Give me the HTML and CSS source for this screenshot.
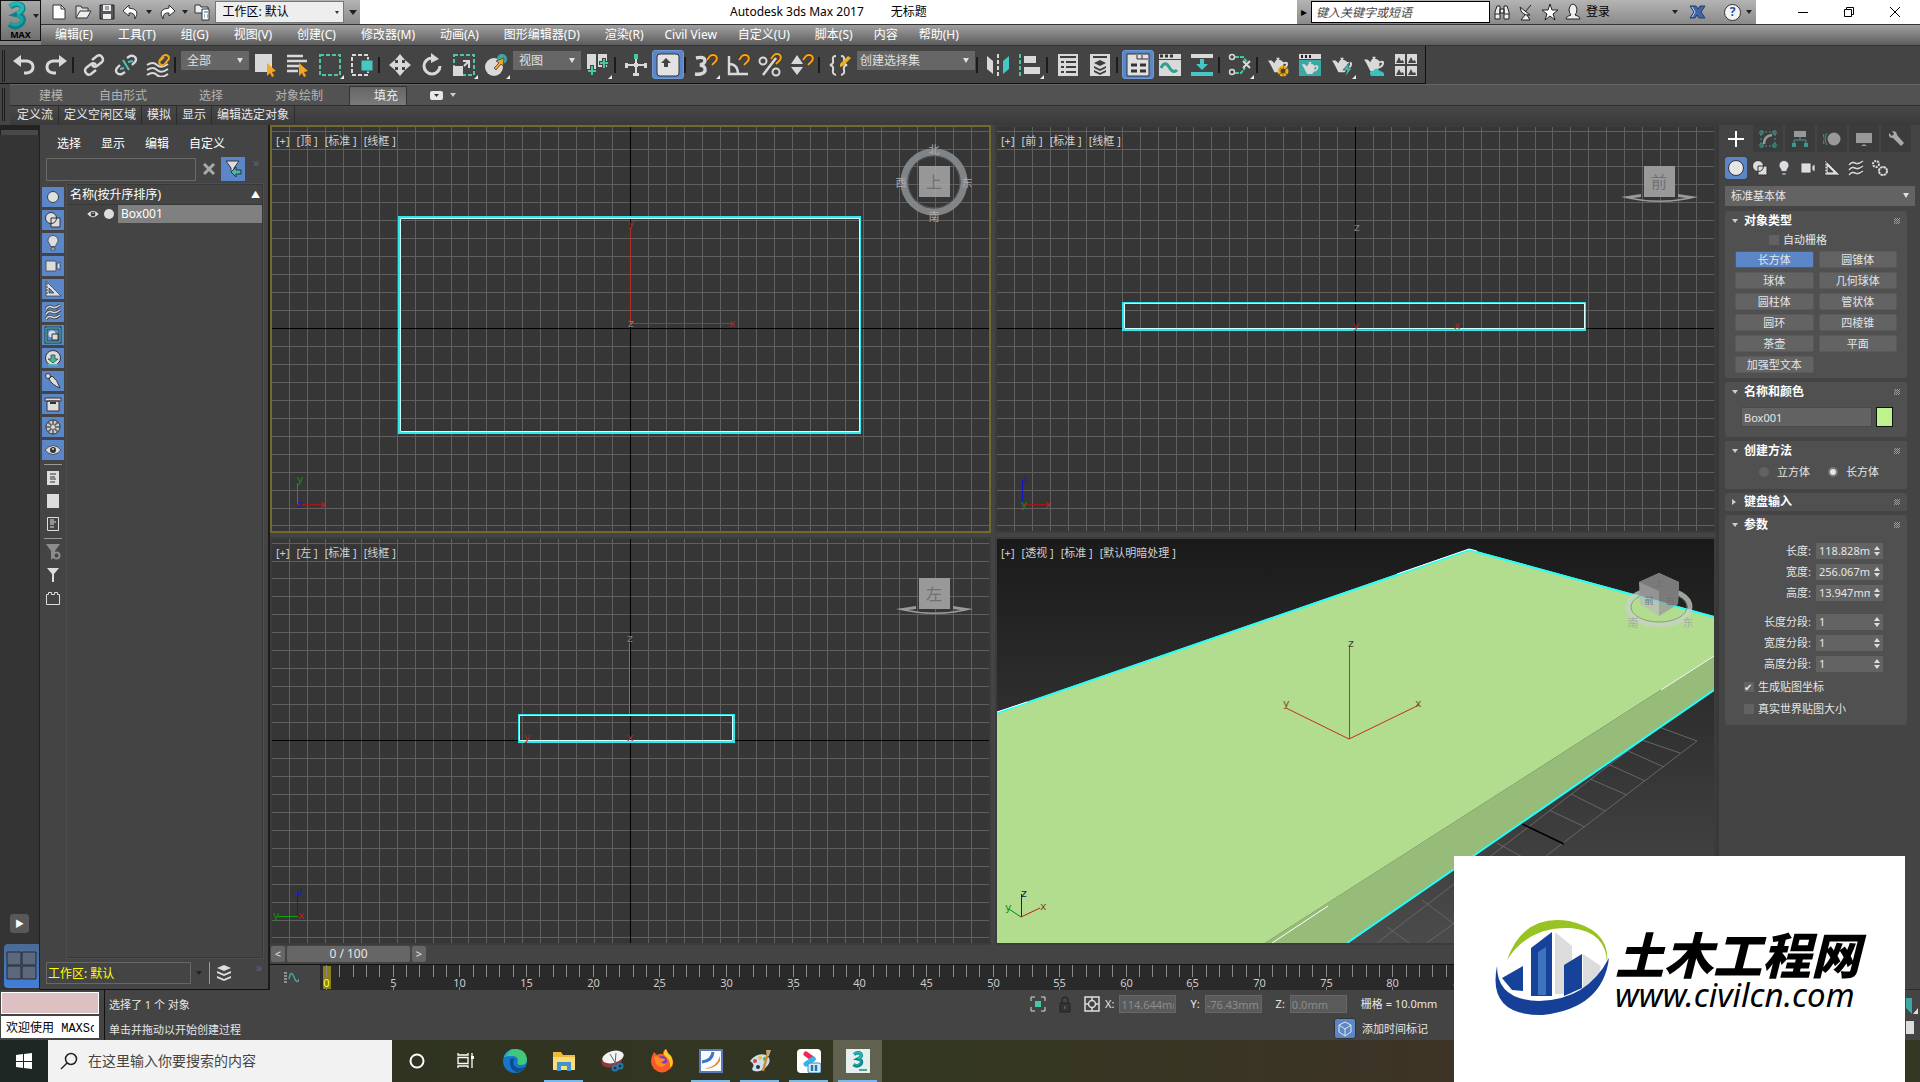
FILE: index.html
```html
<!DOCTYPE html>
<html lang="zh-CN">
<head>
    <meta charset="UTF-8">
    <meta name="viewport" content="width=device-width, initial-scale=1.0">
    <title>Autodesk 3ds Max 2017 - 无标题</title>
    <link rel="stylesheet" href="styles.css">
</head>
<body>
    <!-- 公用图标 -->
    <svg class="symbols" width="0" height="0">
        <symbol id="magnet" viewBox="0 0 12 12"><path d="M1 6L4 2Q7 0 10 2Q12 5 9 8L6 11" fill="none" stroke="#5a2a10" stroke-width="3.4"/><path d="M1 6L4 2Q7 0 10 2Q12 5 9 8L6 11" fill="none" stroke="#f0a818" stroke-width="2"/></symbol>
        <symbol id="teapot" viewBox="0 0 24 20"><path d="M1 5l4 0 3 3q1-3 3-4l-1-2h4l-1 2q4 1 5 3q6-2 5 3q-1 4-6 5l-2 3H8q-2-4-4-8zM18 9v4q3-2 3-4q-1-1-3 0z" fill="#d9d9d9" fill-rule="evenodd"/></symbol>
        <symbol id="layers" viewBox="0 0 16 16"><path d="M8 0l7 3-7 3-7-3zM1 6l7 3 7-3v2l-7 3-7-3zM1 11l7 3 7-3v2l-7 3-7-3z" fill="#ddd"/></symbol>
        <symbol id="shapes" viewBox="0 0 18 18"><circle cx="7" cy="7" r="5.5" fill="#ddd" stroke="#333"/><path d="M7 7h9v9H7z" fill="#ddd" stroke="#333"/><path d="M7 12.500q5 0 5.500-5.500" fill="none" stroke="#333"/></symbol>
        <symbol id="bulb" viewBox="0 0 18 18"><path d="M9 1.500a5 5 0 0 1 5 5c0 2-2 3-2.500 6h-5c-.5-3-2.500-4-2.500-6a5 5 0 0 1 5-5zM7 14h4v2H7z" fill="#ddd" stroke="#3a3f48" stroke-width=".8"/></symbol>
        <symbol id="camera" viewBox="0 0 18 18"><path d="M2 4h10v10H2zM13 7l3-2v8l-3-2z" fill="#ddd" stroke="#3a3f48" stroke-width=".8"/></symbol>
        <symbol id="set-square" viewBox="0 0 18 18"><path d="M2 1l15 15H2zM5 8v5h5z" fill="#ddd" fill-rule="evenodd" stroke="#333" stroke-width=".7"/><path d="M2 4h2M2 7h2M2 10h2M2 13h2" stroke="#333"/></symbol>
        <symbol id="waves" viewBox="0 0 18 18"><path d="M2 6q3-4 6-2t8-2M2 11q3-4 6-2t8-2M2 16q3-4 6-2t8-2" fill="none" stroke="#333" stroke-width="3"/><path d="M2 6q3-4 6-2t8-2M2 11q3-4 6-2t8-2M2 16q3-4 6-2t8-2" fill="none" stroke="#d5d5d5" stroke-width="1.600"/></symbol>
        <symbol id="eye" viewBox="0 0 18 18"><path d="M1 9q8-9 16 0q-8 9-16 0z" fill="#ddd" stroke="#333" stroke-width=".8"/><circle cx="9" cy="9" r="3" fill="#333"/><circle cx="9" cy="8" r="1" fill="#ddd"/></symbol>
        <symbol id="three" viewBox="0 0 24 30"><path d="M5 6Q12 1 17 5Q20 10 12 14Q21 16 17 23Q11 29 4 24" fill="none" stroke="#0e7f86" stroke-width="6"/><path d="M5 5Q12 0 17 5Q19 10 12 13" fill="none" stroke="#25b5b5" stroke-width="4"/><path d="M12 15Q20 17 16 22Q11 27 5 23" fill="none" stroke="#1aa3a3" stroke-width="3"/></symbol>
    </svg>

    <header class="app-header">
        <button class="app-logo" aria-label="3ds Max">
            <svg width="24" height="29"><use href="#three"/></svg>
            <i class="caret"></i>
            <b>MAX</b>
        </button>
        <div class="title-bar">
            <div class="quick-access">
                <button aria-label="新建"><svg width="18" height="18"><path d="M3 2h8l4 4v10H3z" fill="#fff" stroke="#333"/><path d="M11 2v4h4" fill="none" stroke="#333"/></svg></button>
                <button aria-label="打开"><svg width="18" height="18"><path d="M2 15V3h5l1 2h6v3" fill="#ddd" stroke="#333"/><path d="M2 15l4-7h11l-4 7z" fill="#eee" stroke="#333"/></svg></button>
                <button aria-label="保存"><svg width="18" height="18"><path d="M2 2h14v14H2z" fill="#57575f" stroke="#222"/><path d="M5 2h8v6H5zM5 11h8v5H5z" fill="#eee"/><path d="M7 4h4M7 6h4" stroke="#555"/></svg></button>
                <button aria-label="撤消"><svg width="18" height="18"><path d="M7 2L1 8l6 5v-3q6-1 6 6q6-10-6-11z" fill="#fff" stroke="#333"/></svg></button>
                <i class="caret dark"></i>
                <button aria-label="重做"><svg width="18" height="18"><path d="M11 2l6 6-6 5v-3q-6-1-6 6q-6-10 6-11z" fill="#fff" stroke="#333"/></svg></button>
                <i class="caret dark"></i>
                <button aria-label="项目"><svg width="18" height="18"><path d="M2 2h5l1 2h7v6H2z" fill="#eee" stroke="#333"/><path d="M9 6h7v11H9z" fill="#fff" stroke="#333"/><path d="M11 9h4M11 12h1M14 12h1M11 14h1M14 14h1" stroke="#2868a8"/></svg></button>
                <label class="picker workspace-picker"><select aria-label="工作区"><option>工作区: 默认</option></select></label>
                <i class="caret dark wide"></i>
            </div>
            <div class="window-title"><span>Autodesk 3ds Max 2017</span><span>无标题</span></div>
            <div class="info-center">
                <button class="info-toggle" aria-label="折叠">▸</button>
                <input type="text" placeholder="键入关键字或短语" aria-label="搜索帮助">
                <button aria-label="搜索"><svg width="18" height="18"><path d="M2 9l2-6h3v13H2zM16 9l-2-6h-3v13h5zM7 6h4v4H7zM2 11h5M11 11h5" fill="#eee" stroke="#222"/></svg></button>
                <button aria-label="通信中心"><svg width="18" height="18"><path d="M3 4q1 9 10 8zM8 9l6-7M8 12l-4 5h9l-3-5" fill="#eee" stroke="#222"/></svg></button>
                <button aria-label="收藏夹"><svg width="18" height="18"><path d="M9 1l2 6h6l-5 4 2 6-5-4-5 4 2-6-5-4h6z" fill="#fff" stroke="#222"/></svg></button>
                <button class="login"><svg width="18" height="18"><path d="M2 16q0-3 5-4q-2-2-2-6q1-5 4-5t4 5q0 4-2 6q5 1 5 4z" fill="#eee" stroke="#222"/></svg>登录</button>
                <i class="caret dark"></i>
                <button class="exchange" aria-label="Exchange"><svg width="18" height="18"><path d="M1 3h6l2 3 2-3h5l-4 6 4 6h-6l-2-3-2 3H1l4-6z" fill="#3d67a8" stroke="#263c68"/><path d="M3 4l3 5-3 5" stroke="#c0d4ee" fill="none"/></svg></button>
                <button class="help" aria-label="帮助">?</button>
                <i class="caret dark"></i>
            </div>
            <div class="window-buttons">
                <button aria-label="最小化"><svg width="12" height="12"><path d="M1 6.500h10" stroke="#000"/></svg></button>
                <button aria-label="还原"><svg width="12" height="12"><path d="M1.500 3.500h7v7h-7zM3.500 3V1.500h7v7H9" fill="none" stroke="#000"/></svg></button>
                <button aria-label="关闭"><svg width="12" height="12"><path d="M1 1l10 10M11 1L1 11" stroke="#000"/></svg></button>
            </div>
        </div>
        <nav class="menu-bar">
            <button>编辑(E)</button><button>工具(T)</button><button>组(G)</button><button>视图(V)</button><button>创建(C)</button><button>修改器(M)</button><button>动画(A)</button><button>图形编辑器(D)</button><button>渲染(R)</button><button class="tight">Civil View</button><button class="tight">自定义(U)</button><button>脚本(S)</button><button class="tight">内容</button><button class="tight">帮助(H)</button>
        </nav>
    </header>

    <div class="toolbar-row">
        <div class="toolbar">
            <i class="grip"></i>
            <button aria-label="撤消"><svg viewBox="0 0 24 24"><path d="M4 8h11q6 1 6 6t-6 6h-3" fill="none" stroke="#d9d9d9" stroke-width="3"/><path d="M9 2v12L1 8z" fill="#d9d9d9"/></svg></button>
            <button aria-label="重做"><svg viewBox="0 0 24 24"><path d="M20 8H9q-6 1-6 6t6 6h3" fill="none" stroke="#d9d9d9" stroke-width="3"/><path d="M15 2v12l8-6z" fill="#d9d9d9"/></svg></button>
            <i class="sep"></i>
            <button aria-label="链接"><svg viewBox="0 0 24 24" fill="none" stroke="#d9d9d9" stroke-width="2.400"><path d="M10 7l5-4q3-2 5 1t0 5l-5 4q-3 2-5-1M14 17l-5 4q-3 2-5-1t0-5l5-4q3-2 5 1"/></svg></button>
            <button aria-label="取消链接"><svg viewBox="0 0 24 24" fill="none" stroke="#d9d9d9" stroke-width="2.400"><path d="M13 5l3-2q3-1 5 1t0 5l-3 3M11 19l-3 2q-3 1-5-1t0-5l3-3"/><path d="M9 7l6 10M6 16l4-1M14 9l5-1" stroke="#4fc4bd" stroke-width="2"/></svg></button>
            <button aria-label="绑定到空间扭曲"><svg viewBox="0 0 24 24" fill="none"><path d="M1 12q6-4 10 0t11-1M1 17q6-4 10 0t11-1M1 22q6-4 10 0t11-1" stroke="#d9d9d9" stroke-width="2"/><path d="M13 8l4-5q3-2 5 0t0 4l-4 5q-2 1-4-1t1-4l3-3" stroke="#f0a818" stroke-width="2"/></svg></button>
            <i class="sep"></i>
            <label class="picker filter-picker"><select aria-label="选择过滤器"><option>全部</option></select></label>
            <button aria-label="选择对象"><svg viewBox="0 0 24 24"><path d="M1 1h17v18H1z" fill="#d9d9d9"/><path d="M13 10l9 8-4 1 2 4-2 1-2-4-3 3z" fill="#f5a623"/></svg></button>
            <button aria-label="按名称选择"><svg viewBox="0 0 24 24"><path d="M1 3h16M1 8h20M1 13h14M1 18h11" stroke="#d9d9d9" stroke-width="2.600"/><path d="M13 10l9 8-4 1 2 4-2 1-2-4-3 3z" fill="#f5a623"/></svg></button>
            <button class="flyout" aria-label="矩形选择区域"><svg viewBox="0 0 24 24"><path d="M2 2h20v20H2z" fill="none" stroke="#4fc4a8" stroke-width="2" stroke-dasharray="4 2"/></svg></button>
            <button aria-label="窗口/交叉"><svg viewBox="0 0 24 24"><path d="M2 2h16v20H2z" fill="none" stroke="#d9d9d9" stroke-width="2" stroke-dasharray="4 2"/><path d="M11 7h12v11H11z" fill="#45c8c4" stroke="#444"/></svg></button>
            <i class="sep"></i>
            <button aria-label="移动"><svg viewBox="0 0 24 24"><path d="M12 1l5 6h-3v3h3V7l6 5-6 5v-3h-3v3h3l-5 6-5-6h3v-3H7v3l-6-5 6-5v3h3V7H7z" fill="#d9d9d9"/></svg></button>
            <button aria-label="旋转"><svg viewBox="0 0 24 24"><path d="M20 13a8 8 0 1 1-8-8" fill="none" stroke="#d9d9d9" stroke-width="3"/><path d="M11 0v10l8-4z" fill="#d9d9d9"/></svg></button>
            <button class="flyout" aria-label="缩放"><svg viewBox="0 0 24 24"><path d="M2 2h20v20H2z" fill="none" stroke="#4fc4a8" stroke-width="2" stroke-dasharray="4 2"/><path d="M1 13h10v10H1z" fill="#d9d9d9"/><path d="M11 8h6v7M16 9l-4 4" stroke="#d9d9d9" stroke-width="2" fill="none"/></svg></button>
            <button class="flyout" aria-label="放置"><svg viewBox="0 0 24 24"><circle cx="10" cy="14" r="9" fill="#d9d9d9"/><circle cx="18" cy="6" r="5" fill="#3aa9ad"/><path d="M10 15l5-5-3-2 8-3-1 8-2-2-5 6z" fill="#f5a623" stroke="#444" stroke-width=".8"/></svg></button>
            <label class="picker filter-picker"><select aria-label="参考坐标系"><option>视图</option></select></label>
            <button class="flyout" aria-label="轴点中心"><svg viewBox="0 0 24 24"><path d="M1 1h9v16H1zM12 1h9v13h-9z" fill="#d9d9d9"/><path d="M6 12v11M1 18h10M18 5v11M13 10h10" stroke="#444" stroke-width="4"/><path d="M6 13v9M2 18h8M18 6v9M14 10h8" stroke="#45c8a8" stroke-width="2"/></svg></button>
            <i class="sep"></i>
            <button aria-label="选择并操纵"><svg viewBox="0 0 24 24"><path d="M12 5v17M3 12h18" stroke="#d9d9d9" stroke-width="2"/><path d="M10 10h4v4h-4zM9 20h6v3H9zM1 10h3v5H1zM20 10h3v5h-3z" fill="#d9d9d9"/><path d="M10 1h4v5h-4z" fill="#45c8a8"/></svg></button>
            <button class="active" aria-label="键盘快捷键覆盖切换"><svg viewBox="0 0 24 24"><rect x="1" y="1" width="22" height="22" rx="3" fill="#e2e2e2" stroke="#333"/><path d="M10 5l5 5h-3v4H8v-4H5z" fill="#444"/></svg></button>
            <i class="sep"></i>
            <button class="flyout" aria-label="捕捉开关"><svg viewBox="0 0 24 24"><path d="M2 5q8-2 9 2q0 4-5 5q6 1 5 6q-2 4-10 3" fill="none" stroke="#d9d9d9" stroke-width="3.400"/><use href="#magnet" x="12" width="12" height="14"/></svg></button>
            <button aria-label="角度捕捉"><svg viewBox="0 0 24 24"><path d="M3 3v18h19M3 11q9 0 9 10" fill="none" stroke="#d9d9d9" stroke-width="2.400"/><use href="#magnet" x="12" width="12" height="14"/></svg></button>
            <button aria-label="百分比捕捉"><svg viewBox="0 0 24 24"><circle cx="5" cy="8" r="3.500" fill="none" stroke="#d9d9d9" stroke-width="2"/><circle cx="18" cy="19" r="3.500" fill="none" stroke="#d9d9d9" stroke-width="2"/><path d="M18 5L5 22" stroke="#d9d9d9" stroke-width="2.500"/><use href="#magnet" x="12" width="12" height="12"/></svg></button>
            <button aria-label="微调器捕捉"><svg viewBox="0 0 24 24"><path d="M7 2l6 9H1zM1 14h12l-6 8z" fill="#d9d9d9"/><use href="#magnet" x="12" width="12" height="14"/></svg></button>
            <i class="sep"></i>
            <button aria-label="编辑命名选择集"><svg viewBox="0 0 24 24"><path d="M8 3q-4 0-3 4t-3 5q4 1 3 5t3 5M13 3q4 0 3 4t3 5q-4 1-3 5t-3 5" fill="none" stroke="#d9d9d9" stroke-width="2"/><path d="M12 11l8-8 3 2-8 8-3 1z" fill="#f0b020"/></svg></button>
            <label class="picker set-picker"><select aria-label="命名选择集"><option>创建选择集</option></select></label>
            <i class="sep"></i>
            <button aria-label="镜像"><svg viewBox="0 0 24 24"><path d="M1 3l6 5v13l-6-5z" fill="#d9d9d9"/><path d="M23 3l-6 5v13l6-5z" fill="#45c8c4"/><path d="M12 1v22" stroke="#d9d9d9" stroke-width="2" stroke-dasharray="4 2"/></svg></button>
            <button class="flyout" aria-label="对齐"><svg viewBox="0 0 24 24"><path d="M2 1v22" stroke="#45c8a8" stroke-width="2" stroke-dasharray="4 2"/><path d="M6 3h12v7H6zM6 14h16v7H6z" fill="#d9d9d9"/></svg></button>
            <i class="sep"></i>
            <button aria-label="场景资源管理器"><svg viewBox="0 0 24 24"><path d="M2 1h20v22H2z" fill="#d9d9d9"/><path d="M4 4h16M5 9h3M10 9h10M5 14h3M10 14h10M5 19h3M10 19h10" stroke="#3c3c3c" stroke-width="2"/></svg></button>
            <button aria-label="层资源管理器"><svg viewBox="0 0 24 24"><path d="M2 1h20v22H2z" fill="#d9d9d9"/><path d="M5 4h14" stroke="#3c3c3c" stroke-width="2"/><path d="M12 7l6 3-6 3-6-3zM6 13l6 3 6-3v2l-6 3-6-3zM6 17l6 3 6-3v2l-6 3-6-3z" fill="#3c3c3c"/></svg></button>
            <i class="sep"></i>
            <button class="active" aria-label="显示功能区"><svg viewBox="0 0 24 24"><path d="M1 1h22v22H1z" fill="#e0e0e0" stroke="#333"/><path d="M11 2v4h11M16 2v4" fill="none" stroke="#333"/><path d="M5 12h6M14 12h6M5 18h6M14 18h6" stroke="#333" stroke-width="3"/></svg></button>
            <button aria-label="曲线编辑器"><svg viewBox="0 0 24 24"><path d="M1 1h22v22H1z" fill="#d9d9d9"/><path d="M2 3h3M7 3h3M12 3h3" stroke="#333" stroke-width="3"/><path d="M1 6.500h22" stroke="#444"/><path d="M3 15q4-8 8-1t8 3" fill="none" stroke="#2f9f90" stroke-width="3"/></svg></button>
            <button aria-label="图解视图"><svg viewBox="0 0 24 24"><path d="M1 1h22v4H1z" fill="#d9d9d9"/><path d="M1 19h22v4H1zM10 6h4v5h4l-6 6-6-6h4z" fill="#45c8c4"/></svg></button>
            <i class="sep"></i>
            <button class="flyout" aria-label="材质编辑器"><svg viewBox="0 0 24 24"><path d="M7 4h8l4 5M7 20h6l4-5" fill="none" stroke="#45c8a8" stroke-width="2" stroke-dasharray="4 1"/><path d="M15 8l7 7M22 8l-7 7" stroke="#d9d9d9" stroke-width="2"/><circle cx="4" cy="4" r="2.500" fill="none" stroke="#d9d9d9" stroke-width="1.500"/><circle cx="4" cy="19" r="2.500" fill="none" stroke="#d9d9d9" stroke-width="1.500"/></svg></button>
            <i class="sep"></i>
            <button aria-label="渲染设置"><svg viewBox="0 0 24 24"><use href="#teapot" y="3" width="24" height="18"/><circle cx="17" cy="18" r="4" fill="#5a4210" stroke="#f0b020" stroke-width="3" stroke-dasharray="2.500 .7"/></svg></button>
            <button aria-label="渲染帧窗口"><svg viewBox="0 0 24 24"><path d="M1 1h22v5H1z" fill="#d9d9d9"/><path d="M3 3.500h2M7 3.500h2M11 3.500h2" stroke="#222" stroke-width="3"/><path d="M1 7h22v16H1z" fill="#3aa9a5"/><use href="#teapot" x="3" y="7" width="18" height="16"/></svg></button>
            <button class="flyout" aria-label="渲染产品"><svg viewBox="0 0 24 24"><use href="#teapot" y="3" width="24" height="18"/><path d="M20 9l-7 8h4l-2 7 7-9h-4z" fill="#38c4bd" stroke="#444" stroke-width=".7"/></svg></button>
            <button aria-label="在云中渲染"><svg viewBox="0 0 24 24"><use href="#teapot" y="2" width="24" height="18"/><path d="M9 23q-3-5 2-5q3-5 7 0q5 1 4 5z" fill="#38c4bd"/></svg></button>
            <button aria-label="渲染库"><svg viewBox="0 0 24 24"><path d="M1 1h10v10H1zM13 1h10v10H13zM1 13h10v10H1zM13 13h10v10H13z" fill="#d9d9d9"/><path d="M2 10l3-6 2 4 2-1 1 3zM14 10l3-6 2 4 2-1 1 3zM2 22l3-6 2 4 2-1 1 3zM14 22l3-6 2 4 2-1 1 3z" fill="#444"/></svg></button>
        </div>
    </div>

    <div class="ribbon">
        <i class="grip"></i>
        <div class="ribbon-body">
            <div class="ribbon-tabs">
                <button>建模</button><button>自由形式</button><button>选择</button><button>对象绘制</button><button class="current">填充</button>
                <button class="ribbon-min" aria-label="最小化功能区"><svg width="13" height="9"><rect width="13" height="9" rx="2" fill="#e8e8e8"/><path d="M4 3h5L6.500 6z" fill="#333"/></svg></button><i class="caret"></i>
            </div>
            <div class="ribbon-panels">
                <button>定义流</button><button>定义空闲区域</button><button>模拟</button><button>显示</button><button>编辑选定对象</button>
            </div>
        </div>
    </div>

    <main class="workspace">
        <aside class="dock">
            <div class="dock-head"></div>
            <button class="dock-play" aria-label="展开">▶</button>
            <button class="dock-layout" aria-label="视口布局"><svg width="32" height="30"><path d="M1 1h14v13H1zM16 1h14v13H16zM1 15h14v13H1zM16 15h14v13H16z" fill="#5c697c" stroke="#222b38"/></svg></button>
        </aside>

        <section class="explorer">
            <nav class="explorer-menu"><button>选择</button><button>显示</button><button>编辑</button><button>自定义</button></nav>
            <div class="explorer-search">
                <input type="text" aria-label="查找">
                <button class="clear" aria-label="清除"><svg width="12" height="12"><path d="M1 1l10 10M11 1L1 11" stroke="#a8a8a8" stroke-width="3"/></svg></button>
                <button class="filter" aria-label="过滤"><svg width="18" height="18"><path d="M2 1h13l-5 7v6l-3-3V8z" fill="#ddd" stroke="#333"/><path d="M17 10h-5V7l-5 5 5 5v-3h5z" fill="#48b8a0" stroke="#234"/></svg></button>
                <span class="more">»</span>
            </div>
            <div class="explorer-body">
                <div class="explorer-icons">
                    <button class="on" aria-label="几何体"><svg viewBox="0 0 18 18"><circle cx="9" cy="9" r="5.500" fill="#e0e0e0" stroke="#3a3f48"/></svg></button>
                    <button class="on" aria-label="图形"><svg><use href="#shapes"/></svg></button>
                    <button class="on" aria-label="灯光"><svg><use href="#bulb"/></svg></button>
                    <button class="on" aria-label="摄影机"><svg><use href="#camera"/></svg></button>
                    <button class="on" aria-label="辅助对象"><svg><use href="#set-square"/></svg></button>
                    <button class="on" aria-label="空间扭曲"><svg><use href="#waves"/></svg></button>
                    <button class="on" aria-label="组"><svg viewBox="0 0 18 18"><path d="M2 2h14v14H2z" fill="none" stroke="#1f3b48" stroke-width="3"/><path d="M2 2h14v14H2z" fill="none" stroke="#5cd0b4"/><circle cx="8" cy="8" r="3.500" fill="#ddd"/><path d="M8 8h6v6H8z" fill="#ddd" stroke="#333"/></svg></button>
                    <button class="on" aria-label="外部参照"><svg viewBox="0 0 18 18"><circle cx="9" cy="9" r="7.500" fill="#ddd" stroke="#333"/><path d="M7 6h4v4h3l-5 4-5-4h3z" fill="#48b8a0" stroke="#234" stroke-width=".7"/><path d="M4 16h10" stroke="#48b8a0" stroke-width="2"/></svg></button>
                    <button class="on" aria-label="骨骼"><svg viewBox="0 0 18 18"><path d="M5 7l3-3q5 3 8 12q-8-3-11-9z" fill="#ddd" stroke="#333"/><circle cx="4" cy="4" r="2.500" fill="#ddd" stroke="#333"/></svg></button>
                    <button class="on" aria-label="容器"><svg viewBox="0 0 18 18"><path d="M1 3h16v3H1zM3 6h12v10H3z" fill="#ddd" stroke="#333"/><path d="M6 8h6" stroke="#333" stroke-width="2"/></svg></button>
                    <button class="on" aria-label="冻结"><svg viewBox="0 0 18 18"><circle cx="9" cy="9" r="7" fill="#ccc" stroke="#333"/><path d="M9 2v14M2 9h14M4 4l10 10M14 4L4 14" stroke="#555" stroke-width="1.500"/><circle cx="9" cy="9" r="2" fill="#ddd"/></svg></button>
                    <button class="on" aria-label="隐藏"><svg><use href="#eye"/></svg></button>
                    <hr>
                    <button aria-label="显示全部"><svg viewBox="0 0 18 18"><path d="M3 2h12v14H3z" fill="#ddd"/><path d="M6 5h6M6 8h5M6 10h6M6 13h5" stroke="#333"/></svg></button>
                    <button aria-label="不显示"><svg viewBox="0 0 18 18"><path d="M3 2h12v14H3z" fill="#ddd"/></svg></button>
                    <button aria-label="反转显示"><svg viewBox="0 0 18 18"><path d="M3.500 2.500h11v13h-11z" fill="none" stroke="#ddd"/><path d="M6 5h4M6 7h6M6 9h4M6 12h4" stroke="#ddd"/></svg></button>
                    <hr>
                    <button aria-label="配置过滤器"><svg viewBox="0 0 18 18"><path d="M2 1h14l-5 7v5L7 17V8z" fill="#8c8c8c"/><circle cx="12.500" cy="12.500" r="3" fill="#444" stroke="#8c8c8c" stroke-width="2"/></svg></button>
                    <button aria-label="过滤器"><svg viewBox="0 0 18 18"><path d="M3 2h12l-5 6v8H8V8z" fill="#ddd"/></svg></button>
                    <button aria-label="插件"><svg viewBox="0 0 18 18"><path d="M2.500 5.500h2v-2h3v2h3v-2h3v2h2v10h-13z" fill="none" stroke="#ddd"/></svg></button>
                </div>
                <div class="tree">
                    <div class="tree-head"><span>名称(按升序排序)</span><span class="sort">▲</span></div>
                    <div class="tree-row"><svg width="14" height="14"><use href="#eye"/></svg><i class="dot"></i><span class="tree-name">Box001</span></div>
                </div>
            </div>
            <div class="explorer-foot">
                <input type="text" value="工作区: 默认" aria-label="资源管理器名称">
                <i class="caret dark"></i>
                <span class="foot-sep"></span>
                <svg width="16" height="16"><use href="#layers"/></svg>
                <span class="more">»</span>
            </div>
        </section>

        <section class="stage">
            <div class="viewports">
                <div class="viewport selected">
                    <div class="vp-label"><button>[+]</button><button>[顶 ]</button><button>[标准 ]</button><button>[线框 ]</button></div>
                    <svg viewBox="0 0 717 404" preserveAspectRatio="xMidYMid slice">
                        <path class="grid"/>
                        <path class="axis" d="M0 201.500H717M358.500 0V404"/>
                        <path class="edge-cyan" d="M127 90h461v216H127z"/>
                        <path class="edge-white" d="M128.500 91.500h459v213h-459z"/>
                        <path d="M358.500 198V100M358 196.500H462" stroke="#b03028" fill="none"/>
                        <text class="g-red" x="356" y="100">y</text><text class="g-red" x="457" y="200">x</text><text class="g-grey" x="356" y="200">z</text>
                        <path d="M25.500 377V356" stroke="#10a010"/><path d="M26 377.500h26" stroke="#a01818"/>
                        <text class="g-green" x="25" y="356">y</text><text class="g-blue" x="25" y="381">z</text><text class="g-red" x="48" y="381">x</text>
                        <g opacity=".85"><circle cx="662" cy="55" r="30" fill="none" stroke="#8d9296" stroke-width="7"/><circle cx="662" cy="55" r="26" fill="none" stroke="#5b6165"/><path d="M647 39h31v31h-31z" fill="#a8a8a8"/></g>
                        <text class="cube-face" x="662" y="61">上</text><text class="cube-dir" x="662" y="27">北</text><text class="cube-dir" x="662" y="94">南</text><text class="cube-dir" x="629" y="60">西</text><text class="cube-dir" x="695" y="60">东</text>
                    </svg>
                </div>
                <div class="viewport">
                    <div class="vp-label"><button>[+]</button><button>[前 ]</button><button>[标准 ]</button><button>[线框 ]</button></div>
                    <svg viewBox="0 0 717 404" preserveAspectRatio="xMidYMid slice">
                        <path class="grid"/>
                        <path class="axis" d="M0 201.500H717M358.500 0V404"/>
                        <path class="edge-cyan" d="M126 176h462v27H126z"/>
                        <path class="edge-white" d="M127.500 176.500h460v25h-460z"/>
                        <path d="M358 202.500H462" stroke="#999"/>
                        <text class="g-grey" x="357" y="104">z</text><text class="g-red" x="356" y="202">y</text><text class="g-red" x="457" y="202">x</text>
                        <path d="M25.500 377V352" stroke="#1515c0"/><path d="M26 377.500h26" stroke="#a01818"/>
                        <text class="g-blue" x="24" y="356">z</text><text class="g-green" x="24" y="381">y</text><text class="g-red" x="48" y="381">x</text>
                        <path d="M624 70l20-3v3l-8 1q26 5 53 0l-8-1v-3l20 3q-38 10-77 0z" fill="#9a9a9a"/><path d="M647 39h31v31h-31z" fill="#999"/><text class="cube-face" x="662" y="61">前</text>
                    </svg>
                </div>
                <div class="viewport">
                    <div class="vp-label"><button>[+]</button><button>[左 ]</button><button>[标准 ]</button><button>[线框 ]</button></div>
                    <svg viewBox="0 0 717 404" preserveAspectRatio="xMidYMid slice">
                        <path class="grid"/>
                        <path class="axis" d="M0 201.500H717M358.500 0V404"/>
                        <path d="M357.500 104V176" stroke="#777"/>
                        <path class="edge-cyan" d="M247 176h215v27H247z"/>
                        <path class="edge-white" d="M247.500 176.500h213v25h-213z"/>
                        <text class="g-grey" x="355" y="103">z</text><text class="g-red" x="355" y="202">x</text><text class="g-red" x="252" y="202">y</text>
                        <path d="M25.500 377V352" stroke="#1515c0"/><path d="M6 377.500h20" stroke="#10a010"/>
                        <text class="g-blue" x="24" y="356">z</text><text class="g-green" x="1" y="380">y</text><text class="g-red" x="26" y="380">x</text>
                        <path d="M624 70l20-3v3l-8 1q26 5 53 0l-8-1v-3l20 3q-38 10-77 0z" fill="#9a9a9a"/><path d="M647 39h31v31h-31z" fill="#999"/><text class="cube-face" x="662" y="61">左</text>
                    </svg>
                </div>
                <div class="viewport">
                    <div class="vp-label"><button>[+]</button><button>[透视 ]</button><button>[标准 ]</button><button>[默认明暗处理 ]</button></div>
                    <svg viewBox="0 0 717 404" preserveAspectRatio="xMidYMid slice">
                        <defs><linearGradient id="sky" x2="0" y2="1"><stop offset="0" stop-color="#1a1a1a"/><stop offset="1" stop-color="#4b4b4b"/></linearGradient></defs>
                        <path d="M0 0h717v404H0z" fill="url(#sky)"/>
                        <path d="M662 188L700 202L549 317L430 404M645 201l38 13M631 212l36 16M613 226l35 16M593 240l37 16M574 255l34 17M552 271l36 17M500 304l38 21M464 332l60 44M425 361l56 42M390 388l22 16M662 188L380 404" fill="none" stroke="#666"/>
                        <path d="M525 285l42 20" stroke="#000" stroke-width="1.500"/>
                        <path d="M0 173L472 10L717 77V117L268 404H0z" fill="#b2dd8f"/>
                        <path d="M717 117V151L350 404H268z" fill="#97bb79"/>
                        <path d="M0 174L472 11L717 78M717 151L350 404" fill="none" stroke="#2ff" stroke-width="2"/>
                        <path d="M0 173L30 163M400 35L472 10l8 2M717 117L664 151M331 367L275 404" fill="none" stroke="#fff"/>
                        <path d="M352.500 108V200" stroke="#55644a"/><path d="M289 169L352 200L422 166" fill="none" stroke="#c03018"/>
                        <text class="g-dark" x="351" y="108">z</text><text class="g-brown" x="286" y="168">y</text><text class="g-brown" x="418" y="168">x</text>
                        <path d="M24.500 378V355" stroke="#1515c0"/><path d="M24 378L12 370" stroke="#108010"/><path d="M24 378L43 369" stroke="#c02010"/>
                        <text class="g-navy" x="24" y="358">z</text><text class="g-green" x="8" y="372">y</text><text class="g-brown" x="43" y="371">x</text>
                        <g opacity=".75"><ellipse cx="662" cy="68" rx="31" ry="18" fill="none" stroke="#c9d2c6" stroke-width="5"/><ellipse cx="662" cy="68" rx="28" ry="15" fill="none" stroke="#7f8a7a"/><path d="M662 34l20 9-1 22-19 12-19-12-1-22z" fill="#bbb"/><path d="M662 34l20 9-20 9-20-9zM662 52v25l19-12 1-22z" fill="#999"/></g>
                        <text class="cube-dir" x="636" y="88">南</text><text class="cube-dir" x="691" y="88">东</text><text class="cube-small" x="662" y="47">上</text><text class="cube-small" x="652" y="65">前</text><text class="cube-small" x="673" y="65">右</text>
                    </svg>
                </div>
            </div>
            <div class="time-slider">
                <button class="step">&lt;</button><button class="thumb">0 / 100</button><button class="step">&gt;</button>
            </div>
            <div class="track-bar">
                <button aria-label="打开迷你曲线编辑器"><svg width="16" height="14"><path d="M1 2h3M1 5h3M1 8h3M1 11h3" stroke="#ddd"/><path d="M6 8q2-10 5-2t5 2" fill="none" stroke="#3fa8a4" stroke-width="1.500"/></svg></button>
                <svg class="ruler" id="track-ruler"></svg>
            </div>
        </section>

        <aside class="command-panel">
            <div class="panel-tabs">
                <button class="current" aria-label="创建"><svg viewBox="0 0 18 18"><path d="M9 1v16M1 9h16" stroke="#fff" stroke-width="2"/></svg></button>
                <button aria-label="修改"><svg viewBox="0 0 18 18"><path d="M2 2h14v14H2z" fill="none" stroke="#3c9a8c" stroke-dasharray="2 2"/><path d="M1 1h3v3H1zM14 1h3v3h-3zM1 14h3v3H1zM14 14h3v3h-3z" fill="none" stroke="#3c9a8c"/><path d="M5 14q0-8 8-9" fill="none" stroke="#999" stroke-width="2.500"/></svg></button>
                <button aria-label="层次"><svg viewBox="0 0 18 18"><path d="M3 1h12v6H3z" fill="#999"/><path d="M9 7v3M3 14v-4h12v4" fill="none" stroke="#3c9a8c"/><path d="M1 13h4v4H1zM13 13h4v4h-4z" fill="#3c9a8c"/></svg></button>
                <button aria-label="运动"><svg viewBox="0 0 18 18"><circle cx="11" cy="9" r="6.500" fill="#999"/><path d="M4 3q-4 6 0 12M1 4q-3 5 0 10" fill="none" stroke="#3c9a8c"/></svg></button>
                <button aria-label="显示"><svg viewBox="0 0 18 18"><path d="M1 3h16v10H1zM6 16l3-2 3 2z" fill="#999"/></svg></button>
                <button aria-label="实用程序"><svg viewBox="0 0 18 18"><path d="M2 3l3 3 2-2-2-3q5 0 5 4l7 8-3 3-8-8q-5 0-4-5z" fill="#aaa"/></svg></button>
            </div>
            <div class="category">
                <button class="on" aria-label="几何体"><svg viewBox="0 0 18 18"><circle cx="9" cy="9" r="7.500" fill="#e6e6e6" stroke="#333"/></svg></button>
                <button aria-label="图形"><svg><use href="#shapes"/></svg></button>
                <button aria-label="灯光"><svg><use href="#bulb"/></svg></button>
                <button aria-label="摄影机"><svg><use href="#camera"/></svg></button>
                <button aria-label="辅助对象"><svg><use href="#set-square"/></svg></button>
                <button aria-label="空间扭曲"><svg><use href="#waves"/></svg></button>
                <button aria-label="系统"><svg viewBox="0 0 18 18" fill="none" stroke="#ddd"><circle cx="5" cy="5" r="3" stroke-width="2" stroke-dasharray="2 1"/><circle cx="12" cy="12" r="4" stroke-width="2" stroke-dasharray="2.500 .6"/></svg></button>
            </div>
            <label class="picker type-picker"><select aria-label="对象类别"><option>标准基本体</option></select></label>

            <section class="rollout">
                <h2>对象类型</h2>
                <label class="check auto-grid"><input type="checkbox">自动栅格</label>
                <div class="type-grid">
                    <button class="on">长方体</button><button>圆锥体</button>
                    <button>球体</button><button>几何球体</button>
                    <button>圆柱体</button><button>管状体</button>
                    <button>圆环</button><button>四棱锥</button>
                    <button>茶壶</button><button>平面</button>
                    <button>加强型文本</button>
                </div>
            </section>
            <section class="rollout">
                <h2>名称和颜色</h2>
                <div class="name-color"><input type="text" value="Box001" aria-label="名称"><button aria-label="对象颜色"></button></div>
            </section>
            <section class="rollout">
                <h2>创建方法</h2>
                <div class="methods"><label><input type="radio" name="method">立方体</label><label><input type="radio" name="method" checked>长方体</label></div>
            </section>
            <section class="rollout closed">
                <h2>键盘输入</h2>
            </section>
            <section class="rollout">
                <h2>参数</h2>
                <div class="params">
                    <label for="len">长度:</label><span class="spinner"><input id="len" value="118.828mm"></span>
                    <label for="wid">宽度:</label><span class="spinner"><input id="wid" value="256.067mm"></span>
                    <label for="hei">高度:</label><span class="spinner"><input id="hei" value="13.947mm"></span>
                </div>
                <div class="params">
                    <label for="lseg">长度分段:</label><span class="spinner"><input id="lseg" value="1"></span>
                    <label for="wseg">宽度分段:</label><span class="spinner"><input id="wseg" value="1"></span>
                    <label for="hseg">高度分段:</label><span class="spinner"><input id="hseg" value="1"></span>
                </div>
                <label class="check"><input type="checkbox" checked>生成贴图坐标</label>
                <label class="check"><input type="checkbox">真实世界贴图大小</label>
            </section>
        </aside>
    </main>

    <footer class="status">
        <div class="listener">
            <div class="listener-pink"></div>
            <input type="text" value="欢迎使用 MAXScript" aria-label="MAXScript 侦听器">
        </div>
        <div class="messages"><p>选择了 1 个 对象</p><p>单击并拖动以开始创建过程</p></div>
        <div class="coords">
            <div class="coord-row">
                <button aria-label="孤立当前选择"><svg viewBox="0 0 18 18"><path d="M2 6V2h4M12 2h4v4M16 12v4h-4M6 16H2v-4" fill="none" stroke="#ddd"/><path d="M6 6h6v6H6z" fill="#45c8a8"/></svg></button>
                <button aria-label="选择锁定切换"><svg viewBox="0 0 18 18"><path d="M4 8h10v9H4z" fill="#333" stroke="#222"/><path d="M6 8V4q3-4 6 0v4" fill="none" stroke="#2a2a2a" stroke-width="1.500"/><path d="M9 11v3" stroke="#777"/></svg></button>
                <button aria-label="绝对模式"><svg viewBox="0 0 18 18" fill="none" stroke="#ddd" stroke-width="1.500"><path d="M2 2h14v14H2zM9 2v14M2 9h14"/><circle cx="9" cy="9" r="3.500" fill="#444"/></svg></button>
                <label>X:<input type="text" value="114.644mm"></label>
                <label>Y:<input type="text" value="-76.43mm"></label>
                <label>Z:<input type="text" value="0.0mm"></label>
                <span>栅格 = 10.0mm</span>
            </div>
            <div class="tag-row">
                <button class="tag-btn" aria-label="时间标记"><svg viewBox="0 0 18 18" fill="none" stroke="#e6e6e6"><path d="M9 2l6 3v7l-6 4-6-4V5zM3 5l6 4 6-4M9 9v7"/></svg></button>
                <span>添加时间标记</span>
            </div>
        </div>
        <div class="nav-tools"><svg width="12" height="40"><path d="M0 3h6v16l-6-6z" fill="#3aa9a5"/><path d="M12 19v-6l-5 6zM0 26h8v13H0z" fill="#ddd"/></svg></div>
    </footer>

    <footer class="taskbar">
        <button class="start" aria-label="开始"><svg width="16" height="16"><path d="M0 2l7-1v7H0zM8 1l8-1v8H8zM0 9h7v6l-7-1zM8 9h8v7l-8-1z" fill="#fff"/></svg></button>
        <label class="task-search"><svg width="18" height="18"><circle cx="11" cy="7" r="5.500" fill="none" stroke="#222" stroke-width="1.500"/><path d="M7 11l-6 6" stroke="#222" stroke-width="1.500"/></svg><input type="text" placeholder="在这里输入你要搜索的内容"></label>
        <button aria-label="Cortana"><svg viewBox="0 0 24 24"><circle cx="12" cy="12" r="6.500" fill="none" stroke="#fff" stroke-width="2"/></svg></button>
        <button aria-label="任务视图"><svg viewBox="0 0 24 24"><path d="M4 4v2h10V4M4 19v-2h10v2M4 8.500h10v6H4zM18 4v15" fill="none" stroke="#fff" stroke-width="1.300"/><path d="M17 7h3v3h-3z" fill="#fff"/></svg></button>
        <button aria-label="Edge"><svg viewBox="0 0 24 24"><circle cx="12" cy="12" r="12" fill="#1677c8"/><path d="M1 8Q5-1 14 0q9 1 10 10q0 6-6 6q-5 0-3-4q0-5-6-5T1 8z" fill="#42c87c"/><path d="M1 8Q6-2 15 0q-7 0-9 4t-5 4z" fill="#2aa7dc"/><path d="M7 11q-1 9 6 12q6 0 9-5q-8 3-11-2q-2-4 1-6q-4-2-5 1z" fill="#0d4c94"/></svg></button>
        <button class="running" aria-label="文件资源管理器"><svg viewBox="0 0 24 24"><path d="M1 3h8l2 3h12v15H1z" fill="#f0b93a"/><path d="M1 8h22v13H1z" fill="#fbdb7a"/><path d="M5 13h14v9h-4v-5H9v5H5z" fill="#3f94cf"/></svg></button>
        <button aria-label="截图工具"><svg viewBox="0 0 24 24"><ellipse cx="11" cy="11" rx="11" ry="7" transform="rotate(-20 11 11)" fill="#8d3a38"/><ellipse cx="12" cy="8" rx="11" ry="6" transform="rotate(-15 12 8)" fill="#f3f3f3"/><path d="M9 5l6 10M15 4l-1 11" stroke="#667"/><circle cx="14" cy="19" r="2.500" fill="none" stroke="#2878b0" stroke-width="2"/><circle cx="19" cy="17" r="2.500" fill="none" stroke="#2878b0" stroke-width="2"/></svg></button>
        <button aria-label="Firefox"><svg viewBox="0 0 24 24"><path d="M4 3l3 3q3-2 6-1q0-4 3-5q1 4 5 7q5 8-1 13q-8 7-16 0Q-2 13 4 3z" fill="#fa5a28"/><path d="M16 0q1 4 5 7q4 8-1 12q1-8-5-12q-3-3 1-7z" fill="#ffc927"/><circle cx="12" cy="12" r="5" fill="#7a3fc0"/><path d="M4 8q4-2 6 1l5 1q-1 3-4 3q2 3 6 1q-5 7-11 1z" fill="#ff8a22"/></svg></button>
        <button class="running" aria-label="CASS"><svg viewBox="0 0 24 24"><path d="M1 1h22v22H1z" fill="#f8fbff" stroke="#5b78b8" stroke-width="2"/><path d="M3 13q10-1 11-10" fill="none" stroke="#3b73c4" stroke-width="3"/><path d="M5 20q13-2 16-13v5q-5 8-16 8z" fill="#e8862a"/></svg></button>
        <button class="running" aria-label="画图"><svg viewBox="0 0 24 24"><path d="M2 12Q9 3 18 6q6 4 2 10q-6 8-14 6q-3-1-1-4t-3-6z" fill="#c8e0f0"/><circle cx="7" cy="12" r="2" fill="#e04040"/><circle cx="12" cy="9" r="2" fill="#f0c030"/><circle cx="17" cy="10" r="2" fill="#48b048"/><circle cx="10" cy="18" r="2" fill="#333"/><path d="M20 4l-5 18" stroke="#d08830" stroke-width="2.500"/><path d="M18 1h5l-2 6h-2z" fill="#c0a878"/></svg></button>
        <button class="running" aria-label="录屏"><svg viewBox="0 0 24 24"><rect width="24" height="24" rx="4" fill="#fff"/><path d="M9 5l7 5" stroke="#f0285a" stroke-width="5" stroke-linecap="round"/><path d="M16 10l-7 5" stroke="#30b8e8" stroke-width="5" stroke-linecap="round"/><rect x="11" y="14" width="13" height="10" rx="2" fill="#d8ecf8" stroke="#3a88b8"/><path d="M15 16v6M19 16v6" stroke="#2878a8" stroke-width="2.500"/></svg></button>
        <button class="running current" aria-label="3ds Max"><svg viewBox="0 0 24 24"><path d="M0 0h24v24H0z" fill="#e6efee"/><use href="#three" x="5" y="2" width="14" height="17"/><path d="M13 21h8" stroke="#4aa898" stroke-width="2"/></svg></button>
    </footer>

    <div class="site-badge">
        <svg width="120" height="100" viewBox="0 0 120 100">
            <path d="M12 42Q28-4 74 3Q116 12 112 46Q112 14 76 10Q34 8 12 42z" fill="#98c423"/>
            <path d="M60 14L77 28V76H60zM88 36l18 12q-4 20-18 24z" fill="#dcdcdc"/>
            <path d="M36 30L57 14V78H36zM69 47L87 36V70L69 78zM7 60L28 48v25L17 72z" fill="#17429a"/>
            <path d="M43 34l8-5v48h-8z" fill="#3d74bd"/>
            <path d="M2 48Q2 82 44 83Q92 82 114 40Q108 90 48 97Q-8 98 2 48z" fill="#163f97"/>
        </svg>
        <div class="badge-text"><strong>土木工程网</strong><span>www.civilcn.com</span></div>
    </div>

    <script src="script.js"></script>
</body>
</html>
```
FILE: styles.css
```css
*,
*::before,
*::after {
    margin: 0;
    padding: 0;
    box-sizing: border-box;
}

body {
    display: flex;
    flex-direction: column;
    height: 100vh;
    overflow: hidden;
    background: #444;
    color: #e6e6e6;
    font-family: "Noto Sans", "Noto Sans CJK SC", sans-serif;
    font-size: 12px;
    line-height: 16px;
}

button,
input,
select {
    font: inherit;
    color: inherit;
    background: none;
    border: none;
    border-radius: 0;
    outline: none;
    min-width: 0;
}

button {
    display: flex;
    align-items: center;
    justify-content: center;
    white-space: nowrap;
}

.symbols {
    position: absolute;
}

.caret {
    width: 0;
    border: 3px solid transparent;
    border-top: 4px solid #ccc;
    border-bottom: none;
}

.caret.dark {
    border-top-color: #222;
}

.picker {
    position: relative;
    display: block;
}

.picker select {
    appearance: none;
    display: block;
    width: 100%;
    height: 100%;
    padding: 0 6px;
}

.picker::after {
    content: "";
    position: absolute;
    right: 6px;
    top: 7px;
    border: 3px solid transparent;
    border-top: 5px solid #e0e0e0;
    border-bottom: none;
}

/* 标题栏与菜单 */
.app-header {
    display: grid;
    grid-template-columns: 41px 1fr;
    grid-template-rows: 24px 21px;
    background: linear-gradient(#a0a0a0, #5c5c5c) 0 24px no-repeat;
}

.app-logo {
    grid-row: 1 / 3;
    display: grid;
    grid-template-columns: 30px 8px;
    justify-items: center;
    height: 41px;
    border: 1px solid #111;
    background: linear-gradient(#a8a8a8, #707070);
}

.app-logo b {
    grid-column: 1 / 3;
    color: #000;
    font-size: 9px;
    line-height: 10px;
}

.app-logo .caret {
    border-top-color: #222;
}

.title-bar {
    display: flex;
    justify-content: space-between;
    background: #fff;
    color: #000;
}

.quick-access,
.info-center {
    display: flex;
    align-items: center;
    background: linear-gradient(#b4b4b4, #8a8a8a);
}

.quick-access {
    width: 319px;
    padding-left: 6px;
}

.quick-access button,
.info-center button {
    width: 24px;
    height: 24px;
}

.quick-access .caret {
    margin: 0 3px;
}

.workspace-picker {
    width: 129px;
    height: 22px;
    margin-left: 1px;
    background: #eee;
    border: 1px solid #777;
}

.workspace-picker::after {
    top: 9px;
    right: 4px;
    border-width: 3px 2px 0;
    border-top-color: #333;
}

.quick-access .caret.wide {
    margin-left: 5px;
    border-width: 5px 4px 0;
}

.window-title {
    display: flex;
    gap: 20px;
    flex: 1;
    padding-left: 370px;
    line-height: 24px;
    white-space: nowrap;
}

.window-title span + span {
    margin-left: 7px;
}

.info-center {
    width: 459px;
}

.info-center .info-toggle {
    width: 14px;
}

.info-center input {
    width: 179px;
    height: 22px;
    padding: 0 4px;
    background: #fff;
    border: 1px solid #000;
    font-style: italic;
}

.info-center .login {
    width: 50px;
    gap: 4px;
    margin-right: 60px;
}

.info-center .exchange {
    margin: 0 12px 0 8px;
}

.info-center .help {
    width: 17px;
    height: 17px;
    margin: 0 5px 0 2px;
    border-radius: 9px;
    background: #f4f4f4;
    border: 1px solid #333;
    color: #2450a0;
    font-weight: bold;
}

.window-buttons {
    display: flex;
    width: 164px;
    padding-left: 24px;
}

.window-buttons button {
    width: 46px;
}

.menu-bar {
    display: flex;
    align-items: center;
    gap: 25px;
    padding-left: 14px;
    border-top: 1px solid #333;
    background: linear-gradient(#a0a0a0, #5c5c5c);
    color: #fff;
}

.menu-bar .tight {
    margin-left: -4px;
}

/* 主工具栏 */
.toolbar-row {
    display: flex;
    height: 39px;
    background: #444;
    border-top: 1px solid #333;
}

.toolbar {
    display: flex;
    align-items: flex-start;
    padding: 4px 3px 0 2px;
    border-right: 1px solid #111;
    border-bottom: 1px solid #111;
}

.grip {
    width: 3px;
    border: solid #1c1c1c;
    border-width: 0 1px;
}

.toolbar .grip {
    height: 32px;
    margin-right: 3px;
}

.toolbar button {
    position: relative;
    width: 32px;
    height: 29px;
}

.toolbar button svg {
    width: 24px;
    height: 24px;
}

.toolbar .active {
    background: #5b87c8;
    border: 1px solid #6f9ad4;
    border-radius: 3px;
}

.toolbar .flyout::after {
    content: "";
    position: absolute;
    right: 2px;
    bottom: 0;
    border: solid transparent;
    border-width: 0 0 4px 4px;
    border-bottom-color: #eee;
}

.sep {
    width: 6px;
    height: 16px;
    margin-top: 7px;
    border-left: 2px solid #1c1c1c;
}

.filter-picker,
.set-picker {
    height: 19px;
    margin: 1px 1px 0;
    background: #666;
    color: #e0e0e0;
}

.filter-picker {
    width: 68px;
}

.set-picker {
    width: 118px;
}

.set-picker select {
    padding-left: 3px;
}

/* 功能区 */
.ribbon {
    display: flex;
    gap: 5px;
    height: 41px;
    padding-left: 2px;
    background: #444;
}

.ribbon .grip {
    margin: 4px 0;
}

.ribbon-body {
    flex: 1;
}

.ribbon-tabs {
    display: flex;
    align-items: flex-end;
    height: 22px;
    padding-left: 11px;
    background: #525252;
    border-top: 1px solid #666;
    border-bottom: 1px solid #2c2c2c;
    color: #b4b4b4;
}

.ribbon-tabs button {
    height: 19px;
    padding: 0 18px;
}

.ribbon-tabs button + button {
    padding: 0 26px 0 18px;
}

.ribbon-tabs button:nth-child(3),
.ribbon-tabs button:nth-child(4) {
    padding-left: 26px;
}

.ribbon-tabs .current {
    background: linear-gradient(#666, #7a7a7a);
    color: #eee;
    border: 1px solid #333;
    border-bottom: none;
}

.ribbon-tabs button.current {
    padding: 0 8px 0 24px;
}

.ribbon-tabs button.ribbon-min {
    padding: 0 7px 0 23px;
}

.ribbon-tabs .caret {
    align-self: center;
}

.ribbon-panels {
    display: flex;
    height: 19px;
    background: linear-gradient(#484848, #3a3a3a);
}

.ribbon-panels button {
    height: 18px;
    padding: 0 5px;
    border-right: 1px solid #2c2c2c;
    color: #e6e6e6;
}

.ribbon-panels button:first-child {
    padding-left: 7px;
}

/* 左侧 */
.workspace {
    flex: 1;
    display: flex;
    min-height: 0;
}

.dock {
    width: 40px;
    display: flex;
    flex-direction: column;
    background: #343434;
    border-right: 1px solid #222;
}

.dock-head {
    height: 10px;
    margin-bottom: auto;
    border: 1px solid #222;
    border-width: 0 1px;
    background: linear-gradient(#222 0 5px, #484848 5px);
}

.dock-play {
    width: 19px;
    height: 19px;
    margin: 0 0 11px 10px;
    border-radius: 3px;
    background: #585858;
    color: #fff;
    font-size: 9px;
}

.dock-layout {
    height: 44px;
    margin: 0 0 2px 4px;
    border-radius: 4px 0 0 4px;
    background: linear-gradient(#4c6a94, #3f80dc);
}

.explorer {
    display: flex;
    flex-direction: column;
    width: 230px;
    padding: 10px 5px 5px 2px;
    background: #444;
    border-right: 2px solid #1c1c1c;
    border-bottom: 1px solid #111;
}

.explorer-menu {
    display: flex;
    gap: 20px;
    padding: 0 0 0 15px;
    height: 22px;
    color: #fff;
}

.explorer-menu button {
    height: 18px;
}

.explorer-search {
    display: flex;
    align-items: center;
    height: 24px;
    padding-left: 4px;
}

.explorer-search input {
    width: 150px;
    height: 23px;
    border: 1px solid #686868;
}

.explorer-search .clear {
    width: 25px;
}

.explorer-search .filter {
    width: 24px;
    height: 24px;
    background: #5b87c8;
}

.more {
    align-self: flex-start;
    margin-left: 8px;
    line-height: 12px;
    color: #5f6488;
}

.explorer-body {
    display: flex;
    flex: 1;
    gap: 3px;
    padding-top: 3px;
}

.explorer-icons {
    display: flex;
    flex-direction: column;
    gap: 3px;
    width: 22px;
    padding-top: 3px;
}

.explorer-icons button {
    height: 20px;
}

.explorer-icons .on {
    background: #5b87c8;
}

.explorer-icons svg {
    width: 18px;
    height: 18px;
}

.explorer-icons hr {
    margin: 1px 2px 0;
    border: none;
    border-top: 1px solid #999;
}

.tree {
    flex: 1;
    border: 1px solid #383838;
    border-width: 1px 1px 1px 0;
    outline: 1px solid #4e4e4e;
}

.tree-head {
    display: flex;
    justify-content: space-between;
    height: 20px;
    padding: 2px 2px 0 3px;
    border-bottom: 1px solid #383838;
    color: #fff;
}

.sort {
    font-size: 9px;
}

.tree-row {
    display: flex;
    align-items: center;
    gap: 4px;
    height: 18px;
    padding-left: 19px;
}

.dot {
    width: 10px;
    height: 10px;
    border-radius: 5px;
    background: #ddd;
}

.tree-name {
    flex: 1;
    height: 18px;
    padding-left: 3px;
    line-height: 18px;
    background: #808080;
    color: #fff;
}

.explorer-foot {
    display: flex;
    align-items: center;
    height: 26px;
    padding: 4px 0 0 4px;
}

.explorer-foot input {
    width: 145px;
    height: 22px;
    padding: 0 1px;
    border: 1px solid #686868;
    color: #ff0;
}

.explorer-foot .caret {
    margin: 0 7px 0 5px;
}

.foot-sep {
    align-self: stretch;
    border-left: 1px solid #999;
    margin-right: 6px;
}

.explorer-foot .more {
    margin-left: 24px;
}

/* 视口 */
.stage {
    flex: 1;
    display: flex;
    flex-direction: column;
    min-width: 0;
}

.viewports {
    flex: 1;
    display: grid;
    grid-template-columns: 1fr 1fr;
    grid-template-rows: 1fr 1fr;
    gap: 4px;
    min-height: 0;
}

.viewport {
    position: relative;
    min-width: 0;
    min-height: 0;
    border: 2px solid #3c3c3c;
    background: #363636;
}

.viewport.selected {
    border-color: #75682e;
}

.viewport > svg {
    display: block;
    width: 100%;
    height: 100%;
}

.vp-label {
    position: absolute;
    left: 4px;
    top: 6px;
    display: flex;
    gap: 7px;
    color: #d0d0d0;
    font-size: 11px;
}

.grid {
    stroke: #606060;
    shape-rendering: crispEdges;
}

.axis {
    stroke: #000;
    shape-rendering: crispEdges;
}

.edge-cyan {
    fill: none;
    stroke: #30e8ec;
    stroke-width: 2px;
}

.edge-white {
    fill: none;
    stroke: #d4ffff;
}

.viewport text {
    font-size: 11px;
    font-family: "DejaVu Sans", sans-serif;
}

.g-red { fill: #a82a24; }
.g-green { fill: #109010; }
.g-blue { fill: #1818c8; }
.g-navy { fill: #10206a; }
.g-brown { fill: #8a4a22; }
.g-grey { fill: #858585; }
.g-dark { fill: #3a4634; }

.viewport .cube-face,
.viewport .cube-dir,
.viewport .cube-small {
    font-family: "Noto Sans CJK SC", sans-serif;
    text-anchor: middle;
    fill: #707070;
    font-size: 16px;
}

.viewport .cube-dir {
    fill: #aaa;
    font-size: 11px;
}

.viewport .cube-small {
    font-size: 9px;
}

.time-slider {
    display: flex;
    gap: 2px;
    height: 19px;
    padding: 1px 0 2px 1px;
}

.time-slider button {
    background: #666;
    border-radius: 2px;
}

.time-slider .step {
    width: 14px;
    font-size: 11px;
}

.time-slider .thumb {
    width: 123px;
}

.track-bar {
    display: flex;
    height: 26px;
    border-top: 1px solid #111;
}

.track-bar button {
    width: 50px;
    padding-right: 9px;
}

.ruler {
    flex: 1;
    height: 25px;
    min-width: 0;
    background: #2a2a2a;
}

.ruler line {
    stroke: #8a8a8a;
    shape-rendering: crispEdges;
}

.ruler rect {
    fill: #8c8019;
}

.ruler text {
    fill: #ccc;
    font-size: 11px;
    text-anchor: middle;
}

.ruler .now {
    fill: #ff4;
}

/* 命令面板 */
.command-panel {
    width: 204px;
    padding: 0 5px 0 6px;
    background: #444;
    border-left: 3px solid #393939;
    border-bottom: 1px solid #2c2c2c;
}

.panel-tabs {
    display: flex;
    gap: 2px;
    height: 27px;
    margin: 0 -5px 0 -4px;
}

.panel-tabs button {
    width: 30px;
    background: #3c3c3c;
}

.panel-tabs .current {
    background: #444;
}

.panel-tabs svg,
.category svg {
    width: 18px;
    height: 18px;
}

.category {
    display: flex;
    gap: 2px;
    margin: 5px 0 7px;
}

.category button {
    width: 22px;
    height: 22px;
}

.category .on {
    background: #5b87c8;
    border-radius: 3px;
}

.type-picker {
    height: 20px;
    margin-bottom: 5px;
    background: #636363;
    font-size: 11px;
}

.rollout {
    width: 182px;
    margin-bottom: 4px;
    padding: 0 10px 5px;
    background: #505050;
    border-radius: 2px;
    font-size: 11px;
}

.rollout h2 {
    display: flex;
    align-items: center;
    height: 19px;
    margin: 0 -3px;
    font-size: 12px;
    font-weight: bold;
    color: #fff;
}

.rollout h2::before {
    content: "";
    width: 6px;
    margin-right: 6px;
    border: 3px solid transparent;
    border-top: 4px solid #ccc;
    border-bottom: none;
}

.rollout.closed h2::before {
    border: 3px solid transparent;
    border-left: 4px solid #ccc;
    border-right: none;
}

.rollout h2::after {
    content: "";
    width: 6px;
    height: 6px;
    margin-left: auto;
    background: repeating-conic-gradient(#999 0 25%, transparent 0 50%) 0 0 / 2px 2px;
}

.rollout.closed {
    padding-bottom: 0;
}

.rollout.closed h2 {
    height: 18px;
}

.check {
    display: flex;
    align-items: center;
    gap: 4px;
    height: 22px;
    padding-left: 9px;
}

.auto-grid {
    height: 20px;
    padding-left: 34px;
}

.check input {
    appearance: none;
    width: 10px;
    height: 10px;
    background: #626262;
}

.check input:checked::after {
    content: "✔";
    display: block;
    font-size: 10px;
    line-height: 10px;
}

.type-grid {
    display: grid;
    grid-template-columns: 1fr 1fr;
    gap: 4px 5px;
    margin-top: 1px;
}

.type-grid button {
    height: 17px;
    background: #636363;
    border: 1px solid #5a5a5a;
    border-radius: 2px;
}

.type-grid .on {
    background: #5b87c8;
}

.name-color {
    display: flex;
    gap: 4px;
    padding: 6px 4px 5px 6px;
}

.name-color input {
    flex: 1;
    height: 20px;
    padding: 0 2px;
    background: #626262;
    border: 1px solid #4a4a4a;
}

.name-color button {
    width: 17px;
    height: 20px;
    background: #bdf28c;
    border: 1px solid #111;
}

.methods {
    display: flex;
    gap: 18px;
    padding: 4px 0 4px 24px;
}

.methods label {
    display: flex;
    align-items: center;
    gap: 8px;
}

.methods input {
    appearance: none;
    width: 10px;
    height: 10px;
    border-radius: 5px;
    background: #626262;
}

.methods input:checked {
    background: #e6e6e6;
    border: 2px solid #777;
}

.params {
    display: grid;
    grid-template-columns: 76px 67px;
    gap: 5px 5px;
    padding: 9px 0 4px;
    text-align: right;
}

.spinner {
    position: relative;
    height: 16px;
    background: #636363;
}

.spinner input {
    display: block;
    width: 54px;
    height: 16px;
    padding-left: 3px;
}

.spinner::before,
.spinner::after {
    content: "";
    position: absolute;
    right: 3px;
    top: 3px;
    border: 3px solid transparent;
    border-bottom: 4px solid #ddd;
    border-top: none;
}

.spinner::after {
    top: 9px;
    border-top: 4px solid #ddd;
    border-bottom: none;
}

/* 状态栏 */
.status {
    display: flex;
    height: 50px;
    background: #444;
    font-size: 11px;
}

.listener {
    width: 105px;
    padding: 2px 6px 2px 1px;
    border-right: 1px solid #111;
}

.listener-pink,
.listener input {
    display: block;
    width: 98px;
    height: 22px;
    border: 1px solid #fff;
    background: #ddc0c2;
}

.listener input {
    margin-top: 2px;
    padding: 0 4px;
    background: #fff;
    color: #000;
    font-family: "Liberation Mono", "Noto Sans CJK SC", monospace;
    font-size: 12px;
}

.messages {
    flex: 1;
    padding: 7px 4px;
}

.messages p + p {
    margin-top: 9px;
}

.coords {
    width: 437px;
    margin-right: 445px;
}

.coord-row {
    display: flex;
    align-items: center;
    height: 28px;
}

.coord-row button {
    width: 27px;
}

.coords svg {
    width: 18px;
    height: 18px;
}

.coord-row label {
    display: flex;
    align-items: center;
    gap: 5px;
    margin-right: 14px;
}

.coord-row input {
    width: 57px;
    height: 18px;
    padding: 0 1px;
    background: #5a5a5a;
    border: 1px solid #666;
    color: #8c8c8c;
}

.tag-row {
    display: flex;
    gap: 6px;
    align-items: center;
    padding-left: 310px;
}

.tag-btn {
    width: 22px;
    height: 21px;
    background: #5b87c8;
    border-radius: 3px;
    border: 1px solid #333;
}

.nav-tools {
    width: 14px;
    padding-top: 5px;
}

/* 任务栏 */
.taskbar {
    display: flex;
    height: 42px;
    background: linear-gradient(90deg, #2c3120, #343722 50%, #3d3326 75%, #343721);
}

.taskbar .start {
    width: 48px;
    background: #1f2724;
}

.task-search {
    display: flex;
    align-items: center;
    gap: 10px;
    width: 344px;
    padding-left: 12px;
    background: #f2f2f2;
    color: #222;
}

.task-search input {
    flex: 1;
    font-size: 14px;
}

::placeholder {
    color: #444;
    opacity: 1;
}

.taskbar > button:not(.start) {
    width: 49px;
    border: solid transparent;
    border-width: 0 5px;
}

.taskbar > button svg {
    flex: none;
    width: 24px;
    height: 24px;
}

.taskbar > .start svg {
    width: 16px;
    height: 16px;
}

.taskbar > button.running {
    box-shadow: inset 0 -2px #76b9ed;
}

.taskbar > button.current {
    background: #60614e;
    border-color: #60614e;
}

/* 右下角站点标识 */
.site-badge {
    position: absolute;
    right: 15px;
    bottom: 0;
    display: flex;
    align-items: flex-start;
    width: 451px;
    height: 226px;
    padding: 62px 0 0 41px;
    background: #fff;
}

.badge-text {
    display: flex;
    flex-direction: column;
    padding-top: 14px;
    color: #000;
    font-style: italic;
    white-space: nowrap;
}

.badge-text strong {
    font-size: 49px;
    font-weight: 900;
    line-height: 46px;
}

.badge-text span {
    font-size: 33px;
    line-height: 34px;
}
```
FILE: script.js
```js
// 栅格线: 间距相同，以视口中心为原点
const GRID_STEP = 17.95;

function gridPath(w, h, ox, oy) {
    let d = '';
    for (let k = -20; k <= 20; k++) {
        const x = Math.round(ox + k * GRID_STEP) + 0.5;
        const y = Math.round(oy + k * GRID_STEP) + 0.5;
        if (x > 0 && x < w) d += `M${x} 0V${h}`;
        if (y > 0 && y < h) d += `M0 ${y}H${w}`;
    }
    return d;
}

document.querySelectorAll('.grid').forEach(p => {
    p.setAttribute('d', gridPath(717, 404, 358, 201));
});

// 时间轴刻度 0 - 100
function drawRuler() {
    const ruler = document.getElementById('track-ruler');
    const step = (ruler.clientWidth - 63) / 100;
    let html = '<rect x="3" y="1" width="8" height="23"/>';
    for (let i = 0; i <= 100; i++) {
        const x = Math.round(6 + i * step) + 0.5;
        html += `<line x1="${x}" x2="${x}" y1="0" y2="12"/>`;
        if (i % 5 === 0) {
            html += `<line x1="${x}" x2="${x}" y1="22" y2="25"/>`;
            html += `<text x="${x}" y="22"${i === 0 ? ' class="now"' : ''}>${i}</text>`;
        }
    }
    ruler.innerHTML = html;
}

drawRuler();
window.addEventListener('resize', drawRuler);
```
